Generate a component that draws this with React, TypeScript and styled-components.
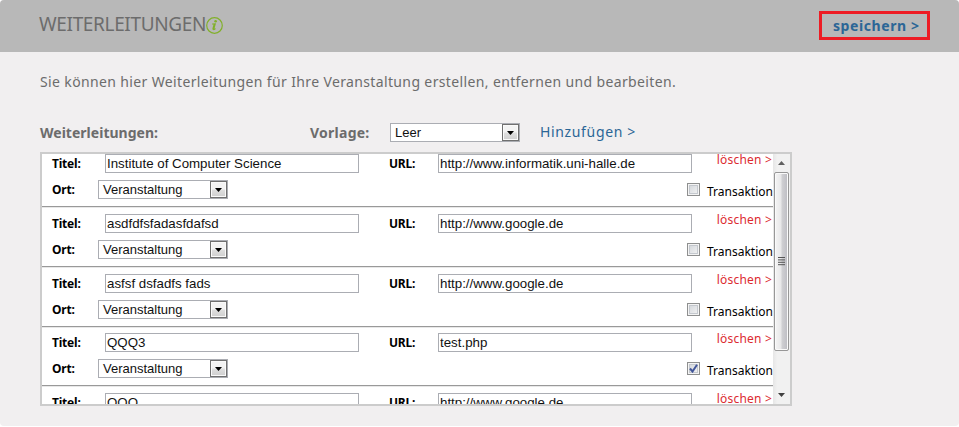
import React from 'react';
import styled, { createGlobalStyle } from 'styled-components';

const Global = createGlobalStyle`
  * { box-sizing: border-box; }
  body { margin: 0; background: #fff; font-family: "Noto Sans", sans-serif; color: #6c6c6c; }
`;

const Panel = styled.main`
  width: 959px;
  height: 426px;
  background: #f1eff0;
  border-radius: 4px;
  overflow: hidden;
`;

const Header = styled.header`
  display: flex;
  align-items: flex-start;
  height: 52px;
  padding: 11px 29px 0 39px;
  background: #b8b8b8;
`;

const Title = styled.h1`
  margin: 1px 0 0;
  width: 166px;
  font-size: 19px;
  line-height: 24px;
  font-weight: 400;
  letter-spacing: -0.35px;
  white-space: nowrap;
`;

const InfoIcon = styled.svg`
  margin-top: 5px;
  flex: none;
`;

const SaveButton = styled.a`
  margin-left: auto;
  width: 111px;
  height: 29px;
  padding-left: 11px;
  border: 3px solid #ed1c24;
  color: #2b6696;
  font-size: 14px;
  line-height: 24px;
  font-weight: 700;
  letter-spacing: 0.58px;
  white-space: nowrap;
`;

const Intro = styled.p`
  margin: 20px 0 0 40px;
  font-size: 14px;
  line-height: 20px;
  letter-spacing: 0.365px;
  white-space: nowrap;
`;

const Toolbar = styled.div`
  display: grid;
  grid-template-columns: 270px 80px 150px auto;
  align-items: start;
  margin: 31px 0 0 40px;
  height: 29px;
`;

const ToolbarLabel = styled.span<{ $spacing?: number }>`
  font-size: 14px;
  line-height: 20px;
  font-weight: 700;
  letter-spacing: ${p => p.$spacing ?? 0}px;
`;

const AddLink = styled.a`
  margin-top: -1px;
  color: #2b6696;
  font-size: 14px;
  line-height: 20px;
  letter-spacing: 0.65px;
`;

const SelectBox = styled.div<{ $width: number }>`
  display: flex;
  width: ${p => p.$width}px;
  height: 19px;
  padding-left: 4px;
  background: #fff;
  border: 1px solid #abadb3;
  color: #111;
  font: 13px/17px "Liberation Sans", sans-serif;
`;

const SelectButton = styled.span`
  display: grid;
  place-items: center;
  width: 17px;
  height: 17px;
  margin-left: auto;
  border: 1px solid #707070;
  box-shadow: inset 0 0 0 1px #fafafa;
  background: linear-gradient(#f3f3f3 0 48%, #dfdfdf 52%, #cfcfcf);
`;

const ListFrame = styled.section`
  display: flex;
  width: 752px;
  height: 254px;
  margin-left: 40px;
  border: 2px solid #ccc;
  background: #fff;
  overflow: hidden;
`;

const Rows = styled.div`
  width: 731px;
  margin-top: -7px;
  flex: none;
`;

const Row = styled.div<{ $height: number; $inset: number }>`
  height: ${p => p.$height}px;
  padding: ${p => p.$inset}px 0 0 10px;
  border-bottom: 1px solid #999;
  box-shadow: 0 1px #e8e8e8;
`;

const FieldLine = styled.div`
  display: grid;
  grid-template-columns: 53px 284px 49px 254px 1fr;
  height: 26px;
`;

const PlaceLine = styled.div`
  display: flex;
  height: 20px;
`;

const Label = styled.label<{ $width?: number }>`
  width: ${p => (p.$width ? p.$width + 'px' : 'auto')};
  color: #000;
  font-size: 12px;
  line-height: 19px;
  font-weight: 700;
  letter-spacing: -0.2px;
`;

const Input = styled.input`
  width: 254px;
  height: 19px;
  padding: 0 0 0 1px;
  border: 1px solid #abadb3;
  border-radius: 0;
  background: #fff;
  color: #111;
  font: 13.3px/17px "Liberation Sans", sans-serif;
  outline: none;
`;

const DeleteLink = styled.a`
  justify-self: end;
  margin: -3px 1px 0 0;
  color: #dc2a30;
  font-size: 12px;
  line-height: 18px;
  letter-spacing: 0.2px;
  white-space: nowrap;
`;

const Check = styled.span`
  display: grid;
  place-items: center;
  width: 13px;
  height: 13px;
  margin: 3px 7px 0 auto;
  border: 1px solid #8e8f8f;
  box-shadow: inset 0 0 0 1px #f4f4f4, inset 0 0 0 2px #c4c8ce;
  background: linear-gradient(135deg, #cfd3d8, #f6f6f6);
`;

const CheckLabel = styled.span`
  width: 66px;
  margin-top: 3px;
  color: #000;
  font-size: 12px;
  line-height: 18px;
  white-space: nowrap;
`;

const Scrollbar = styled.div`
  display: flex;
  flex-direction: column;
  width: 17px;
  height: 250px;
  padding: 0 1px;
  background: linear-gradient(90deg, #e6e6e6, #f1f1f1 25%, #f1f1f1);
`;

const ScrollArrow = styled.span<{ $end?: boolean }>`
  display: grid;
  place-items: center;
  height: 18px;
  margin-top: ${p => (p.$end ? 'auto' : 0)};
`;

const Thumb = styled.div`
  display: grid;
  place-items: center;
  height: 179px;
  border: 1px solid #979797;
  border-radius: 2px;
  box-shadow: inset 0 0 0 1px #fafafa;
  background: linear-gradient(90deg, #f5f5f5, #e8e8e9 45%, #cfcfd2 55%, #bcbcc2);
`;

function Select({ width, value }: { width: number; value: string }) {
  return (
    <SelectBox $width={width}>
      {value}
      <SelectButton>
        <svg width="7" height="4" viewBox="0 0 7 4"><path d="M0 0h7L3.5 4z" fill="#000" /></svg>
      </SelectButton>
    </SelectBox>
  );
}

const entries = [
  { title: 'Institute of Computer Science', url: 'http://www.informatik.uni-halle.de', checked: false, height: 60, inset: 7 },
  { title: 'asdfdfsfadasfdafsd', url: 'http://www.google.de', checked: false, height: 60, inset: 7 },
  { title: 'asfsf dsfadfs fads', url: 'http://www.google.de', checked: false, height: 60, inset: 7 },
  { title: 'QQQ3', url: 'test.php', checked: true, height: 59, inset: 6 },
  { title: 'QQQ', url: 'http://www.google.de', checked: false, height: 60, inset: 7 },
];

export default function App() {
  return (
    <>
      <Global />
      <Panel>
        <Header>
          <Title>WEITERLEITUNGEN</Title>
          <InfoIcon width="18" height="18" viewBox="0 0 18 18">
            <circle cx="9.5" cy="9.5" r="7.8" fill="none" stroke="#82b02b" strokeWidth="1.2" />
            <path d="M7.2 7.6L11 7.2L9.6 12.3Q9.6 12.9 10.8 12.2L10.6 13.2Q9.4 14.3 8.2 14.1Q7.1 13.8 7.4 12.6L8.5 8.6L7 8.5z" fill="#82b02b" />
            <circle cx="10.6" cy="5.2" r="1.3" fill="#82b02b" />
          </InfoIcon>
          <SaveButton>speichern &gt;</SaveButton>
        </Header>
        <Intro>Sie können hier Weiterleitungen für Ihre Veranstaltung erstellen, entfernen und bearbeiten.</Intro>
        <Toolbar>
          <ToolbarLabel $spacing={0.02}>Weiterleitungen:</ToolbarLabel>
          <ToolbarLabel $spacing={0.25}>Vorlage:</ToolbarLabel>
          <Select width={130} value="Leer" />
          <AddLink>Hinzufügen &gt;</AddLink>
        </Toolbar>
        <ListFrame>
          <Rows>
            {entries.map((e, i) => (
              <Row key={i} $height={e.height} $inset={e.inset}>
                <FieldLine>
                  <Label>Titel:</Label>
                  <Input defaultValue={e.title} />
                  <Label>URL:</Label>
                  <Input defaultValue={e.url} />
                  <DeleteLink>löschen &gt;</DeleteLink>
                </FieldLine>
                <PlaceLine>
                  <Label $width={46}>Ort:</Label>
                  <Select width={130} value="Veranstaltung" />
                  <Check>
                    {e.checked && (
                      <svg width="9" height="9" viewBox="0 0 9 9"><path d="M1 4.5L3.5 7.5L8 .8" fill="none" stroke="#42569a" strokeWidth="2" /></svg>
                    )}
                  </Check>
                  <CheckLabel>Transaktion</CheckLabel>
                </PlaceLine>
              </Row>
            ))}
          </Rows>
          <Scrollbar>
            <ScrollArrow><svg width="7" height="4" viewBox="0 0 7 4"><path d="M0 4h7L3.5 0z" fill="#606060" /></svg></ScrollArrow>
            <Thumb>
              <svg width="7" height="9" viewBox="0 0 7 9"><path d="M0 .5h7M0 2.9h7M0 5.3h7M0 7.7h7" stroke="#555" /></svg>
            </Thumb>
            <ScrollArrow $end><svg width="7" height="4" viewBox="0 0 7 4"><path d="M0 0h7L3.5 4z" fill="#404040" /></svg></ScrollArrow>
          </Scrollbar>
        </ListFrame>
      </Panel>
    </>
  );
}
